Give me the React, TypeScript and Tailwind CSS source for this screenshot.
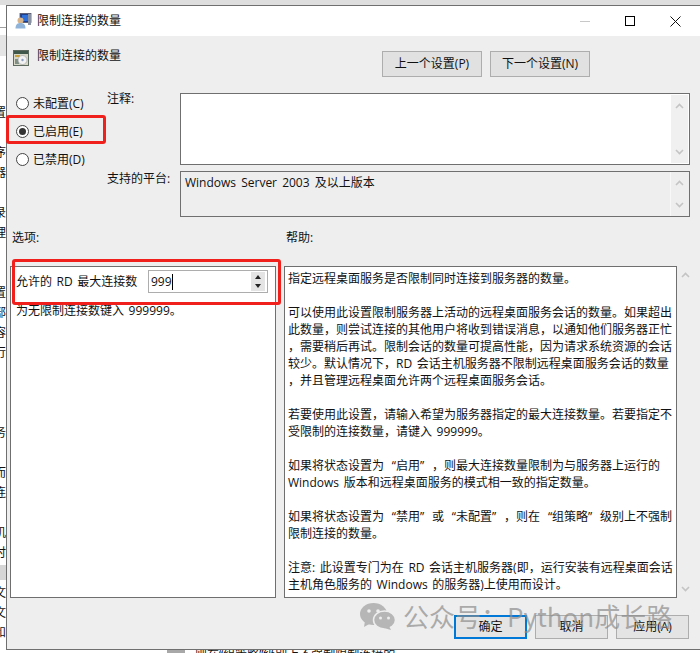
import React from 'react';

const FONT = "font-['Segoe_UI','Open_Sans','Noto_Sans_CJK_SC',sans-serif]";

const HELP_LINES = [
  '指定远程桌面服务是否限制同时连接到服务器的数量。',
  '',
  '可以使用此设置限制服务器上活动的远程桌面服务会话的数量。如果超出',
  '此数量，则尝试连接的其他用户将收到错误消息，以通知他们服务器正忙',
  '，需要稍后再试。限制会话的数量可提高性能，因为请求系统资源的会话',
  '较少。默认情况下，RD 会话主机服务器不限制远程桌面服务会话的数量',
  '，并且管理远程桌面允许两个远程桌面服务会话。',
  '',
  '若要使用此设置，请输入希望为服务器指定的最大连接数量。若要指定不',
  '受限制的连接数量，请键入 999999。',
  '',
  '如果将状态设置为“启用”，则最大连接数量限制为与服务器上运行的',
  'Windows 版本和远程桌面服务的模式相一致的指定数量。',
  '',
  '如果将状态设置为“禁用”或“未配置”，则在“组策略”级别上不强制',
  '限制连接的数量。',
  '',
  '注意: 此设置专门为在 RD 会话主机服务器(即，运行安装有远程桌面会话',
  '主机角色服务的 Windows 的服务器)上使用而设计。',
];

// clipped text of the window behind the dialog: [gap above, char]
const BEHIND = [
  [106, '置'], [25, '序'], [5, '器'], [25, '录'], [5, '理'], [45, '置'], [5, '部'], [5, '容'], [5, '行'],
  [65, '务'], [25, '而'], [5, '连'], [25, '机'], [5, '时'], [5, ''], [5, '文'], [5, '文'], [5, '和'],
] as const;

const Arrow = ({ up }: { up?: boolean }) => (
  <svg width="9" height="6" viewBox="0 0 9 6" fill="none" stroke="#c4c4c4" strokeWidth="1.6">
    <path d={up ? 'M1 5 L4.5 1.5 L8 5' : 'M1 1 L4.5 4.5 L8 1'} />
  </svg>
);

const ScrollBar = ({ className }: { className: string }) => (
  <div className={`flex flex-col items-center justify-between ${className}`}>
    <Arrow up />
    <Arrow />
  </div>
);

const Radio = ({ label, checked }: { label: string; checked?: boolean }) => (
  <div className="h-5 flex items-center gap-[4px]">
    <span className="w-[13px] h-[13px] rounded-full border border-[#444] bg-white flex items-center justify-center">
      {checked && <span className="w-[7px] h-[7px] rounded-full bg-[#333]" />}
    </span>
    <span className="pt-px">{label}</span>
  </div>
);

const TitleIcon = () => (
  <svg width="17" height="16" viewBox="0 0 17 16" className="shrink-0">
    <rect x="5" y="0.5" width="11" height="9" fill="#1c3f8f" stroke="#556" strokeWidth="0.8" />
    <rect x="7" y="2" width="7" height="6" fill="#2f6fd8" />
    <rect x="13" y="1" width="3" height="11" fill="#8a93a6" />
    <circle cx="5.5" cy="7.5" r="3" fill="#d7b48c" />
    <path d="M0.5 15.5 C0.5 11 3 10 5.5 10 C8 10 10.5 11 10.5 15.5 Z" fill="#8fb3d9" />
  </svg>
);

const PolicyIcon = () => (
  <svg width="16" height="16" viewBox="0 0 16 16" className="shrink-0">
    <rect x="0.5" y="0.5" width="15" height="15" fill="#d8d8c8" stroke="#5c6a60" />
    <rect x="1" y="1" width="14" height="3" fill="#40584a" />
    <rect x="2" y="5" width="5" height="2" fill="#c8a03c" />
    <rect x="2" y="9" width="4" height="5" fill="#7f8f86" />
    <circle cx="9.5" cy="10" r="4.5" fill="#f3f3f3" stroke="#9a9a9a" strokeWidth="0.6" />
    <circle cx="9.5" cy="10" r="1.2" fill="#8aa0c0" />
  </svg>
);

const WeChatMark = () => (
  <svg width="36" height="27" viewBox="0 0 36 27" className="shrink-0">
    <ellipse cx="13.5" cy="11" rx="13.5" ry="11" fill="#b6b6b6" />
    <path d="M5 18 L4 24 L11 20 Z" fill="#b6b6b6" />
    <circle cx="9" cy="8" r="1.8" fill="#eeeeee" />
    <circle cx="18" cy="8" r="1.8" fill="#eeeeee" />
    <ellipse cx="24.5" cy="17" rx="11" ry="9" fill="#b6b6b6" stroke="#eeeeee" strokeWidth="1.5" />
    <path d="M29 23 L31 27 L24 25 Z" fill="#b6b6b6" />
    <circle cx="20.5" cy="15" r="1.5" fill="#eeeeee" />
    <circle cx="28.5" cy="15" r="1.5" fill="#eeeeee" />
  </svg>
);

const NavButton = ({ label }: { label: string }) => (
  <div className="w-[100px] h-[26px] bg-[#e1e1e1] border border-[#adadad] flex items-center justify-center">{label}</div>
);

const FootButton = ({ label, primary }: { label: string; primary?: boolean }) => (
  <div
    className={`w-[73px] h-[24px] bg-[#e1e1e1]/80 flex items-center justify-center ${
      primary ? 'border-2 border-[#0078d7]' : 'border border-[#adadad]'
    }`}
  >
    {label}
  </div>
);

// curly quotes come out narrow in the latin font, the reference has them full width
const HelpLine = ({ text }: { text: string }) => (
  <div className="h-[17px]">
    {text.split(/([“”])/).map((part, i) =>
      part === '“' ? (
        <span key={i} className="inline-block w-[12px] text-right">{part}</span>
      ) : part === '”' ? (
        <span key={i} className="inline-block w-[12px] text-left">{part}</span>
      ) : (
        part
      ),
    )}
  </div>
);

export default function App() {
  return (
    <div className={`relative w-[700px] h-[653px] overflow-hidden bg-white text-[12px] text-[#111] [word-spacing:1.5px] flex flex-col ${FONT}`}>
      <div className="h-[5px] shrink-0 bg-[#dedede]" />

      <div className="flex-1 min-h-0 flex">
        <div className="w-[6px] shrink-0 overflow-hidden flex flex-col items-end -mt-[5px]">
          <div className="h-[27px] shrink-0" />
          <div className="h-px w-full shrink-0 bg-[#a0a0a0]" />
          <div className="h-[7px] shrink-0" />
          <div className="h-[21px] w-full shrink-0 bg-[#e4e4e4]" />
          <div className="-mt-[57px] flex flex-col items-end">
            {BEHIND.map(([gap, ch], i) => (
              <div
                key={i}
                className={`w-[12px] h-[15px] leading-[15px] shrink-0 mr-[-6px] translate-x-[-6px] ${ch === '' ? 'bg-[#d6d6d6]' : ''}`}
                style={{ marginTop: gap }}
              >
                {ch}
              </div>
            ))}
          </div>
        </div>

        {/* dialog */}
        <div className="flex-1 min-w-0 border-l border-t border-b border-[#6f6f6f] bg-[#eeeeee] flex flex-col">
          <div className="h-[30px] shrink-0 bg-white flex items-center pl-[8px]">
            <TitleIcon />
            <span className="ml-[5px]">限制连接的数量</span>
            <div className="ml-auto flex items-center">
              <span className="w-[10px] h-px bg-[#c8c8c8]" />
              <span className="ml-[35px] w-[10px] h-[10px] border border-black" />
              <svg width="11" height="11" viewBox="0 0 11 11" className="ml-[35px] mr-[19px]" stroke="#111" strokeWidth="1">
                <path d="M0.5 0.5 L10.5 10.5 M10.5 0.5 L0.5 10.5" />
              </svg>
            </div>
          </div>

          <div className="flex-1 min-h-0 flex flex-col">
            <div className="flex pt-[14px] pl-[6px] pr-[110px] h-[57px] shrink-0">
              <div className="flex items-start gap-[8px]">
                <PolicyIcon />
                <span className="leading-[11px]">限制连接的数量</span>
              </div>
              <div className="ml-auto flex gap-[8px] h-[26px] mt-px">
                <NavButton label="上一个设置(P)" />
                <NavButton label="下一个设置(N)" />
              </div>
            </div>

            <div className="flex h-[124px] shrink-0">
              <div className="w-[100px] pl-[9px] flex flex-col gap-2">
                <Radio label="未配置(C)" />
                <Radio label="已启用(E)" checked />
                <Radio label="已禁用(D)" />
              </div>
              <div className="w-[73px] flex flex-col pt-px">
                <span className="leading-[10px]">注释:</span>
                <span className="mt-[69px] leading-[12px]">支持的平台:</span>
              </div>
              <div className="w-[510px] flex flex-col gap-[6px]">
                <div className="h-[72px] border border-[#6f6f6f] bg-white flex justify-end">
                  <ScrollBar className="w-[17px] bg-[#f0f0f0] my-px mr-px py-[8px]" />
                </div>
                <div className="h-[46px] border border-[#6f6f6f] flex">
                  <div className="flex-1 pl-[4px] pt-[2px] leading-[18px] [word-spacing:2px]">Windows Server 2003 及以上版本</div>
                  <ScrollBar className="w-[18px] border-l border-[#f8f8f8] mr-px py-[8px]" />
                </div>
              </div>
            </div>

            <div className="flex h-[49px] shrink-0 pl-[5px] pt-[14px]">
              <span className="w-[274px] leading-[14px]">选项:</span>
              <span className="leading-[14px]">帮助:</span>
            </div>

            <div className="flex h-[332px] shrink-0 pl-[3px]">
              <div className="w-[266px] border border-[#6f6f6f] bg-white px-[5px]">
                <div className="flex items-center h-[29px]">
                  <span className="w-[132px]">允许的 RD 最大连接数</span>
                  <div className="w-[120px] h-[23px] border border-[#adadad] flex items-center pl-[2px]">
                    <span>999</span>
                    <span className="w-px h-[16px] bg-black" />
                    <div className="ml-auto mr-[2px] w-[14px] h-[19px] bg-[#e4e4e4] flex flex-col items-center justify-around">
                      <span className="w-0 h-0 border-x-[3.5px] border-x-transparent border-b-[4px] border-b-[#222]" />
                      <span className="w-0 h-0 border-x-[3.5px] border-x-transparent border-t-[4px] border-t-[#222]" />
                    </div>
                  </div>
                </div>
                <div className="mt-[6px] leading-[17px]">为无限制连接数键入 999999。</div>
              </div>
              <div className="ml-[8px] w-[393px] border border-[#6f6f6f] bg-white pl-[3px] pt-[3px] leading-[17px] whitespace-pre">
                {HELP_LINES.map((line, i) => (
                  <HelpLine key={i} text={line} />
                ))}
              </div>
              <ScrollBar className="w-[16px] py-[6px]" />
            </div>

            <div className="flex gap-[8px] pt-[17px] pl-[447px]">
              <FootButton label="确定" primary />
              <FootButton label="取消" />
              <FootButton label="应用(A)" />
            </div>
          </div>
        </div>
      </div>

      {/* window behind, showing under the dialog */}
      <div className="h-[3px] shrink-0 overflow-hidden flex bg-white">
        <div className="w-[167px] shrink-0" />
        <div className="w-[18px] shrink-0 bg-[#a8a8a8]" />
        <div className="ml-[10px] -mt-[4px] whitespace-nowrap">则在“组策略”级别上不强制限制连接的</div>
      </div>

      {/* red annotation boxes */}
      <div className="absolute left-[6px] top-[115px] w-[100px] h-[29px] border-[3px] border-[#f0201c] rounded-[3px]" />
      <div className="absolute left-[12px] top-[259px] w-[269px] h-[46px] border-[3px] border-[#f0201c] rounded-[3px]" />

      {/* watermark */}
      <div className="absolute left-[360px] top-[598px] flex items-center gap-[7px] pointer-events-none">
        <WeChatMark />
        <span className="text-[26px] leading-[36px] font-['Noto_Sans_CJK_SC',sans-serif] font-normal text-[#8c8c8c]/70 whitespace-nowrap">公众号：Python成长路</span>
      </div>
    </div>
  );
}
